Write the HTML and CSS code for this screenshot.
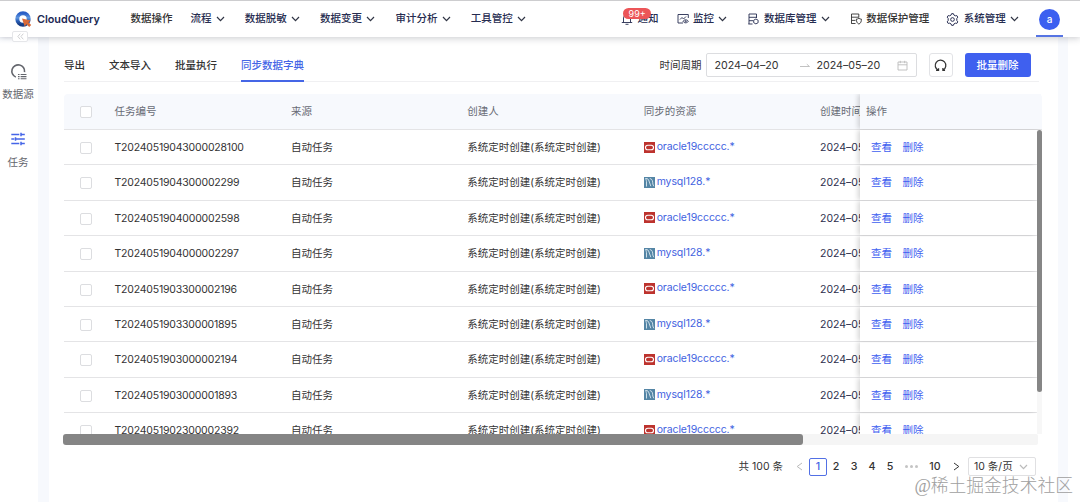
FILE: index.html
```html
<!DOCTYPE html>
<html lang="zh-CN">
<head>
<meta charset="utf-8">
<title>CloudQuery</title>
<link rel="stylesheet" href="styles.css">
</head>
<body>
<svg class="defs" width="0" height="0">
  <defs>
    <symbol id="down" viewBox="0 0 9 6"><path d="M1 1l3.5 3.7L8 1" fill="none" stroke="currentColor" stroke-width="1.2"/></symbol>
    <symbol id="oracle" viewBox="0 0 11 11"><rect width="11" height="11" fill="#bd332e"/><rect x="1.5" y="3.2" width="8" height="4.6" rx="2.3" fill="none" stroke="#fff" stroke-width="1.1"/></symbol>
    <symbol id="mysql" viewBox="0 0 11 11"><rect width="11" height="11" fill="#5485a5"/><path d="M2.500 9.500V4.500C2.300 3 1.800 2 1.500 1.500 4 1.300 4.500 2.500 5 4l1.800 5.200M5.800 1.500c2.600.3 3 3 3 5.500l1 2.300" fill="none" stroke="#dbe8ef" stroke-width=".9"/></symbol>
  </defs>
</svg>
<div class="app">
  <header class="topbar">
    <div class="brand">
      <svg class="logo" viewBox="0 0 17 17">
        <defs><linearGradient id="ring" x1="0" y1="0" x2="0" y2="1"><stop offset="0" stop-color="#2a5fc6"/><stop offset=".4" stop-color="#5f97e0"/><stop offset=".65" stop-color="#2c62bb"/><stop offset="1" stop-color="#173c83"/></linearGradient></defs>
        <circle cx="8" cy="8" r="5.700" fill="none" stroke="url(#ring)" stroke-width="4"/>
        <path d="M7 7.500l8.700 2.100-2.300 1.700 2.800 2.800-2 2-2.800-2.800-1.700 2.300z" fill="#d96a38"/>
      </svg>
      <span class="brand-name">CloudQuery</span>
    </div>
    <nav class="menu">
      <a class="plain">数据操作</a>
      <a>流程<svg class="chev"><use href="#down"/></svg></a>
      <a>数据脱敏<svg class="chev"><use href="#down"/></svg></a>
      <a>数据变更<svg class="chev"><use href="#down"/></svg></a>
      <a>审计分析<svg class="chev"><use href="#down"/></svg></a>
      <a>工具管控<svg class="chev"><use href="#down"/></svg></a>
    </nav>
    <nav class="tools">
      <a class="notice"><svg class="ico" viewBox="0 0 12 12"><path d="M.8 9.500h10.400M2.500 9.500V5a3.500 3.500 0 0 1 7 0v4.500M4.500 11.300h3" /></svg>通知<span class="badge">99+</span></a>
      <a><svg class="ico" viewBox="0 0 12 12"><path d="M6 10H1V1.500h10.300V5M3 6.500l2-2 1.500 1.500L9 3.500"/><path d="M6 8.300c1.300-2 4-2 5.400 0-1.400 2-4.100 2-5.400 0z"/><circle cx="8.700" cy="8.300" r=".6"/></svg>监控<svg class="chev"><use href="#down"/></svg></a>
      <a><svg class="ico" viewBox="0 0 12 12"><path d="M5.500 11H1.300M9.500 5V1H2v10M2 4.300h7.500M2 7.700h4"/><path d="M8.900 6l2.200 1.200v2.500l-2.200 1.200-2.200-1.200V7.200z"/></svg>数据库管理<svg class="chev"><use href="#down"/></svg></a>
      <a class="protect"><svg class="ico" viewBox="0 0 12 12"><path d="M5.500 10.500H1.300M8.800 4.500V1H1.500v9.500M1.500 4.200h7.300M1.500 7.400h4"/><path d="M8.900 5.300c.8.600 1.500.8 2.500.8 0 2.500-.5 4-2.500 5-2-1-2.500-2.500-2.500-5 1 0 1.700-.2 2.500-.8z"/></svg>数据保护管理</a>
      <a><svg class="ico gear" viewBox="0 0 12 12"><path d="M4.700 1.900 5.200.6h1.600l.5 1.300 1.300.7 1.400-.2.9 1.400-.9 1.200v2l.9 1.200-.9 1.400-1.400-.2-1.300.7-.5 1.300H5.200l-.5-1.300-1.300-.7-1.400.2-.9-1.400L2 7V5l-.9-1.200L2 2.400l1.400.2z"/><circle cx="6" cy="6" r="1.700"/></svg>系统管理<svg class="chev"><use href="#down"/></svg></a>
      <div class="user"><span class="avatar">a</span></div>
    </nav>
  </header>

  <div class="body">
    <aside class="side">
      <span class="fold"><svg viewBox="0 0 8 8"><path d="M3.700.8L1 4l2.700 3.200M7.200.8L4.500 4l2.700 3.200"/></svg></span>
      <a class="side-item"><svg viewBox="0 0 16 16" fill="none" stroke="currentColor"><path d="M5.500 13.300A6 6 0 1 1 13.700 8.500" stroke-width="1.500"/><path d="M7.500 10.800h1.500m1 0h5.500M7.500 12.800h1.500m1 0h5.500M7.500 14.800h1.500m1 0h5.500" stroke-width="1.100"/></svg><span>数据源</span></a>
      <a class="side-item active"><svg viewBox="0 0 16 16" fill="none" stroke="currentColor" stroke-width="1.500"><path d="M1.300 3.500h8m1.500 0h4M1.300 8h3m1.500 0h9M1.300 12.500h8m1.500 0h4M11 1.800v3.400M5.500 6.300v3.400M11 10.800v3.400"/></svg><span>任务</span></a>
    </aside>
    <main class="panel">
      <div class="tabs">
        <a>导出</a><a>文本导入</a><a>批量执行</a><a class="on">同步数据字典</a>
        <div class="filters">
          <label>时间周期</label>
          <div class="range">
            <span class="from">2024–04–20</span>
            <svg class="arrow" viewBox="0 0 10 5"><path d="M0 3.500h9.500L6.800 1.200" fill="none" stroke="#bbb" stroke-width=".9"/></svg>
            <span class="to">2024–05–20</span>
            <svg class="cal" viewBox="0 0 11 11"><path d="M1 2h9v8H1zM1 4.800h9M3.300.8v2.400M7.700.8v2.400" fill="none" stroke="#bbb" stroke-width=".9"/></svg>
          </div>
          <button class="reload"><svg viewBox="0 0 12 12"><path d="M4 10.400A4.900 4.900 0 1 1 8.400 10.200M1.900 10.500h2.300V8.600M8.200 8.400v2h2" fill="none" stroke="#333" stroke-width="1.150"/></svg></button>
          <button class="delete">批量删除</button>
        </div>
      </div>

      <section class="table">
        <div class="row head"><div class="pick"><span class="box"></span></div><div>任务编号</div><div>来源</div><div>创建人</div><div>同步的资源</div><div class="date">创建时间</div><div class="ops">操作</div></div>
        <div class="rows">
          <div class="list">
            <div class="row"><div class="pick"><span class="box"></span></div><div class="id">T20240519043000028100</div><div>自动任务</div><div>系统定时创建(系统定时创建)</div><div class="res"><svg><use href="#oracle"/></svg>oracle19ccccc.*</div><div class="date">2024–05</div><div class="ops"><a>查看</a><a>删除</a></div></div>
            <div class="row"><div class="pick"><span class="box"></span></div><div class="id">T2024051904300002299</div><div>自动任务</div><div>系统定时创建(系统定时创建)</div><div class="res"><svg><use href="#mysql"/></svg>mysql128.*</div><div class="date">2024–05</div><div class="ops"><a>查看</a><a>删除</a></div></div>
            <div class="row"><div class="pick"><span class="box"></span></div><div class="id">T2024051904000002598</div><div>自动任务</div><div>系统定时创建(系统定时创建)</div><div class="res"><svg><use href="#oracle"/></svg>oracle19ccccc.*</div><div class="date">2024–05</div><div class="ops"><a>查看</a><a>删除</a></div></div>
            <div class="row"><div class="pick"><span class="box"></span></div><div class="id">T2024051904000002297</div><div>自动任务</div><div>系统定时创建(系统定时创建)</div><div class="res"><svg><use href="#mysql"/></svg>mysql128.*</div><div class="date">2024–05</div><div class="ops"><a>查看</a><a>删除</a></div></div>
            <div class="row"><div class="pick"><span class="box"></span></div><div class="id">T2024051903300002196</div><div>自动任务</div><div>系统定时创建(系统定时创建)</div><div class="res"><svg><use href="#oracle"/></svg>oracle19ccccc.*</div><div class="date">2024–05</div><div class="ops"><a>查看</a><a>删除</a></div></div>
            <div class="row"><div class="pick"><span class="box"></span></div><div class="id">T2024051903300001895</div><div>自动任务</div><div>系统定时创建(系统定时创建)</div><div class="res"><svg><use href="#mysql"/></svg>mysql128.*</div><div class="date">2024–05</div><div class="ops"><a>查看</a><a>删除</a></div></div>
            <div class="row"><div class="pick"><span class="box"></span></div><div class="id">T2024051903000002194</div><div>自动任务</div><div>系统定时创建(系统定时创建)</div><div class="res"><svg><use href="#oracle"/></svg>oracle19ccccc.*</div><div class="date">2024–05</div><div class="ops"><a>查看</a><a>删除</a></div></div>
            <div class="row"><div class="pick"><span class="box"></span></div><div class="id">T2024051903000001893</div><div>自动任务</div><div>系统定时创建(系统定时创建)</div><div class="res"><svg><use href="#mysql"/></svg>mysql128.*</div><div class="date">2024–05</div><div class="ops"><a>查看</a><a>删除</a></div></div>
            <div class="row"><div class="pick"><span class="box"></span></div><div class="id">T2024051902300002392</div><div>自动任务</div><div>系统定时创建(系统定时创建)</div><div class="res"><svg><use href="#oracle"/></svg>oracle19ccccc.*</div><div class="date">2024–05</div><div class="ops"><a>查看</a><a>删除</a></div></div>
          </div>
          <div class="vbar"><span></span></div>
        </div>
        <div class="hbar"><span></span></div>
      </section>

      <footer class="pager">
        <span class="total">共 100 条</span>
        <svg class="prev" viewBox="0 0 7 9"><path d="M6 1L1.200 4.500 6 8"/></svg>
        <span class="pg current">1</span><span class="pg">2</span><span class="pg">3</span><span class="pg">4</span><span class="pg">5</span>
        <span class="dots"><b></b><b></b><b></b></span>
        <span class="pg ten">10</span>
        <svg class="next" viewBox="0 0 7 9"><path d="M1 1l4.800 3.500L1 8"/></svg>
        <span class="size">10 条/页<svg class="chev"><use href="#down"/></svg></span>
      </footer>
    </main>
    <div class="gutter"></div>
  </div>
  <div class="watermark">@稀土掘金技术社区</div>
</div>
</body>
</html>
```
FILE: styles.css
```css
* { box-sizing: border-box; }
body {
  margin: 0;
  font: 10.5px/16px Inter, "Noto Sans CJK SC", sans-serif;
  color: #333;
}
.defs { position: absolute; }
.app {
  position: relative;
  display: flex;
  flex-direction: column;
  width: 1080px;
  height: 502px;
  overflow: hidden;
  background: #fff;
}

/* top bar */
.topbar {
  position: relative;
  z-index: 2;
  display: flex;
  flex: none;
  height: 37px;
  padding-left: 15px;
  border-top: 1px solid #cdcdcf;
  background: #fff;
  box-shadow: 0 1px 7px rgba(30, 35, 50, .25);
  color: #262c50;
}
.brand { display: flex; align-items: center; width: 115.500px; }
.logo { width: 17px; height: 17px; }
.brand-name {
  margin: 1px 0 0 5px;
  font: 600 10.800px/16px Inter, sans-serif;
  color: #202954;
}
.menu, .tools { display: flex; align-items: center; white-space: nowrap; font-weight: 500; }
.menu { gap: 20px; flex: 1; }
.menu a, .tools a { display: flex; align-items: center; }
.menu .plain { margin-right: -2px; color: #333; }
.chev { width: 9px; height: 6px; margin-left: 4.300px; color: #303545; }
.tools { gap: 20px; }
.ico {
  width: 12px;
  height: 12px;
  margin-right: 4.500px;
  fill: none;
  stroke: currentColor;
  stroke-width: .9;
}
.tools .notice { position: relative; margin-right: -2px; }
.notice .ico { margin-right: 5px; }
.badge {
  position: absolute;
  left: 2.500px;
  top: -3px;
  width: 28px;
  height: 11px;
  border-radius: 6px;
  background: #ec5558;
  color: #fff;
  font-size: 9px;
  font-weight: 400;
  line-height: 11px;
  text-align: center;
}
.tools .protect { margin-right: -3px; color: #333; padding-bottom: 1px; }
.gear { width: 13px; height: 13px; }
.user {
  display: flex;
  justify-content: center;
  align-items: center;
  width: 27px;
  height: 36px;
  margin: 0 17px 0 -3px;
  padding-top: 2px;
  border-bottom: 2px solid #5674e3;
}
.avatar {
  width: 21px;
  height: 21px;
  border-radius: 50%;
  background: #3b5ff0;
  color: #fff;
  font-size: 10px;
  line-height: 21px;
  text-align: center;
}

/* body and side bar */
.body { display: flex; flex: 1; min-height: 0; background: #f7f9fd; }
.side {
  position: relative;
  z-index: 3;
  display: flex;
  flex-direction: column;
  align-items: center;
  width: 38px;
  background: linear-gradient(rgba(255, 255, 255, 0), #fff 7px);
  color: #64666d;
}
.fold {
  position: absolute;
  left: 12px;
  top: -6px;
  display: flex;
  align-items: center;
  justify-content: center;
  width: 16px;
  height: 11px;
  border: 1px solid #e5e6e9;
  border-radius: 2px;
  background: #fff;
}
.fold svg { width: 7px; height: 7px; fill: none; stroke: #c8c9cc; }
.side-item {
  display: flex;
  flex-direction: column;
  align-items: center;
  gap: 6px;
  width: 36px;
  height: 68px;
  padding-top: 3px;
  margin-right: 2px;
  white-space: nowrap;
}
.side-item svg { width: 17px; height: 17px; }
.side .side-item:nth-of-type(1) { margin-top: 23px; }
.side .side-item span { margin-top: 1px; }
.side .active svg { color: #4565e8; width: 16px; height: 16px; margin-bottom: 1px; }
.panel {
  display: flex;
  flex-direction: column;
  width: 1009px;
  margin-left: 11px;
  padding: 10px 15px 0 15px;
  background: #fff;
}
.gutter { flex: 1; margin-left: 10px; background: #fff; }

/* tabs and filters */
.tabs {
  display: flex;
  align-items: stretch;
  flex: none;
  gap: 24px;
  height: 35px;
  width: 975px;
  border-bottom: 1px solid #f0f0f2;
  line-height: 37px;
  font-weight: 500;
}
.tabs > .on { color: #4566e6; border-bottom: 2px solid #4566e6; margin-bottom: -1px; }
.filters { display: flex; align-items: center; margin-left: auto; margin-right: 8.500px; padding-top: 2px; font-weight: 400; }
.filters label { margin-right: 4px; line-height: 37px; }
.range {
  display: flex;
  align-items: center;
  width: 211px;
  height: 24px;
  padding: 0 8px;
  border: 1px solid #dcdde0;
  border-radius: 2px;
  font-size: 10.700px;
}
.from { width: 85px; }
.arrow { width: 10px; height: 5px; margin-right: 7px; }
.cal { width: 11px; height: 11px; margin-left: auto; }
.filters button { height: 24px; padding: 0; border-radius: 3px; font: inherit; }
.reload {
  display: flex;
  align-items: center;
  justify-content: center;
  width: 24px;
  margin: 0 12px;
  border: 1px solid #e2e3e6;
  background: #fff;
}
.reload svg { width: 13px; height: 13px; }
.filters .delete {
  width: 66px;
  border: 0;
  background: #3f60ef;
  color: #fff;
  font-weight: 500;
  line-height: 25px;
}

/* table */
.table { display: flex; flex-direction: column; flex: none; height: 351px; width: 978px; margin-top: 12px; }
.row {
  display: flex;
  height: 35.400px;
  width: 972.500px;
  border-bottom: 1px solid #e4e4e6;
  line-height: 36.600px;
  white-space: nowrap;
}
.row > div { width: 176.400px; flex: none; }
.row .pick { width: 50.500px; padding: 12px 0 0 16px; }
.box { display: block; width: 12px; height: 12px; border: 1px solid #dcdde0; border-radius: 2px; background: #fff; }
.row > .date { width: 40px; overflow: hidden; color: #2c304c; }
.row > .ops {
  display: flex;
  gap: 10.500px;
  width: 176px;
  padding-left: 11px;
  background: #fff;
  box-shadow: -2px 0 5px rgba(0, 0, 0, .17);
  clip-path: inset(0 0 -1px -7px);
  color: #3e60f0;
}
.row.head {
  flex: none;
  height: 36px;
  width: 978px;
  border-radius: 4px 4px 0 0;
  background: #f7f9fd;
  color: #686b75;
}
.head > .date { color: inherit; }
.head > .ops { width: 181px; padding-left: 6px; background: #f7f9fd; color: inherit; }
.id { letter-spacing: -.2px; }
.row .res { display: flex; align-items: center; gap: 2px; color: #4262df; letter-spacing: -.1px; }
.res svg { width: 11px; height: 11px; }
.rows { display: flex; flex: 1; min-height: 0; overflow: hidden; }
.list { width: 972.500px; flex: none; }
.vbar { width: 6px; height: 305px; background: #f7f7f7; }
.vbar span { display: block; height: 262px; border-radius: 3px; background: #868686; }
.hbar { flex: none; height: 11px; width: 975px; margin-left: -1px; background: #f5f5f5; border-radius: 2px; }
.hbar span { display: block; width: 740px; height: 11px; border-radius: 3px; background: #858585; }

/* pagination */
.pager {
  display: flex;
  align-items: center;
  align-self: flex-end;
  height: 19px;
  margin: 12px 7px 0 0;
}
.total { margin-right: 13px; }
.prev, .next { width: 7px; height: 9px; fill: none; stroke: #bbb; }
.prev { margin-right: 6px; }
.next { stroke: #333; margin: 0 8px 0 9px; }
.pg { width: 18px; text-align: center; font-weight: 500; font-size: 10.700px; }
.current { height: 18px; border: 1px solid #5270e5; border-radius: 2px; line-height: 16px; color: #4262e5; }
.dots { display: flex; gap: 2px; margin: 0 8px 0 6px; }
.dots b { width: 3px; height: 3px; border-radius: 50%; background: #c4c4c4; }
.size {
  display: flex;
  align-items: center;
  width: 68px;
  height: 19px;
  padding-left: 5px;
  border: 1px solid #e0e0e2;
  border-radius: 2px;
}
.size .chev { color: #bbb; margin-left: 6px; }
.watermark {
  position: absolute;
  right: 7px;
  top: 473px;
  color: #a0a0a0;
  font: 300 17.800px/26px "Liberation Serif", "Noto Sans CJK SC", serif;
  white-space: nowrap;
}
```
